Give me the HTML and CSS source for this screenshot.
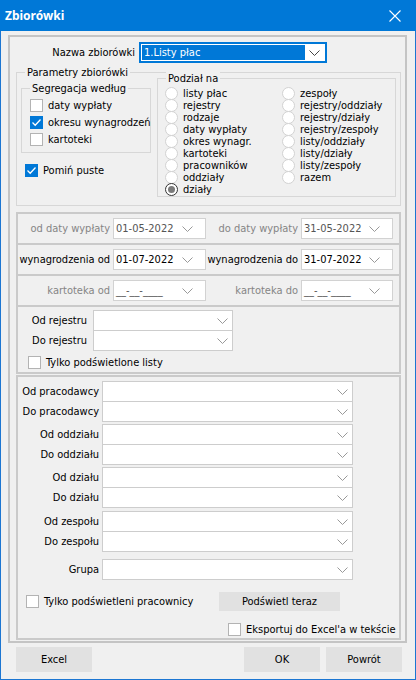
FILE: index.html
```html
<!DOCTYPE html>
<html lang="pl">
<head>
    <meta charset="UTF-8">
    <title>Zbiorówki</title>
    <link rel="stylesheet" href="styles.css">
</head>
<body>
    <div class="window">
        <div class="titlebar">
            <span class="title">Zbiorówki</span>
            <svg class="close" width="12" height="12" viewBox="0 0 12 12"><path d="M0.5 0.5 L11.5 11.5 M11.5 0.5 L0.5 11.5" stroke="#fff" stroke-width="1.1" fill="none"/></svg>
        </div>

        <div class="frame">
            <div class="name-row">
                <span class="name-label">Nazwa zbiorówki</span>
                <div class="combo focused">
                    <span class="sel">1.Listy płac</span>
                    <svg width="11" height="6" viewBox="0 0 11 6"><path d="M0.5 0.5 L5.5 5.5 L10.5 0.5" stroke="#444" fill="none"/></svg>
                </div>
            </div>

            <div class="group params">
                <div class="caption">Parametry zbiorówki</div>
                <div class="params-body">
                    <div class="params-left">
                        <div class="group segreg">
                            <div class="caption">Segregacja według</div>
                            <div class="check"><span class="box"></span>daty wypłaty</div>
                            <div class="check"><span class="box on"><svg width="11" height="11" viewBox="0 0 11 11"><path d="M1.5 5.5 L4.2 8.2 L9.5 2.5" stroke="#fff" stroke-width="1.3" fill="none"/></svg></span>okresu wynagrodzeń</div>
                            <div class="check"><span class="box"></span>kartoteki</div>
                        </div>
                        <div class="check skip"><span class="box on"><svg width="11" height="11" viewBox="0 0 11 11"><path d="M1.5 5.5 L4.2 8.2 L9.5 2.5" stroke="#fff" stroke-width="1.3" fill="none"/></svg></span>Pomiń puste</div>
                    </div>

                    <div class="group split">
                        <div class="caption">Podział na</div>
                        <div class="radio-cols">
                            <div class="radio-col first">
                                <div class="radio"><span class="dot"></span>listy płac</div>
                                <div class="radio"><span class="dot"></span>rejestry</div>
                                <div class="radio"><span class="dot"></span>rodzaje</div>
                                <div class="radio"><span class="dot"></span>daty wypłaty</div>
                                <div class="radio"><span class="dot"></span>okres wynagr.</div>
                                <div class="radio"><span class="dot"></span>kartoteki</div>
                                <div class="radio"><span class="dot"></span>pracowników</div>
                                <div class="radio"><span class="dot"></span>oddziały</div>
                                <div class="radio"><span class="dot on"></span>działy</div>
                            </div>
                            <div class="radio-col">
                                <div class="radio"><span class="dot"></span>zespoły</div>
                                <div class="radio"><span class="dot"></span>rejestry/oddziały</div>
                                <div class="radio"><span class="dot"></span>rejestry/działy</div>
                                <div class="radio"><span class="dot"></span>rejestry/zespoły</div>
                                <div class="radio"><span class="dot"></span>listy/oddziały</div>
                                <div class="radio"><span class="dot"></span>listy/działy</div>
                                <div class="radio"><span class="dot"></span>listy/zespoły</div>
                                <div class="radio"><span class="dot"></span>razem</div>
                            </div>
                        </div>
                    </div>
                </div>
            </div>

            <div class="panel dates">
                <div class="drow">
                    <span class="dlabel dim">od daty wypłaty</span>
                    <div class="date dim"><span>01-05-2022</span><svg width="11" height="6" viewBox="0 0 11 6"><path d="M0.5 0.5 L5.5 5.5 L10.5 0.5" stroke="#999" fill="none"/></svg></div>
                    <span class="dlabel dim">do daty wypłaty</span>
                    <div class="date dim"><span>31-05-2022</span><svg width="11" height="6" viewBox="0 0 11 6"><path d="M0.5 0.5 L5.5 5.5 L10.5 0.5" stroke="#999" fill="none"/></svg></div>
                </div>
                <div class="drow">
                    <span class="dlabel">wynagrodzenia od</span>
                    <div class="date"><span>01-07-2022</span><svg width="11" height="6" viewBox="0 0 11 6"><path d="M0.5 0.5 L5.5 5.5 L10.5 0.5" stroke="#999" fill="none"/></svg></div>
                    <span class="dlabel">wynagrodzenia do</span>
                    <div class="date"><span>31-07-2022</span><svg width="11" height="6" viewBox="0 0 11 6"><path d="M0.5 0.5 L5.5 5.5 L10.5 0.5" stroke="#999" fill="none"/></svg></div>
                </div>
                <div class="drow">
                    <span class="dlabel dim">kartoteka od</span>
                    <div class="date dim"><span>__-__-____</span><svg width="11" height="6" viewBox="0 0 11 6"><path d="M0.5 0.5 L5.5 5.5 L10.5 0.5" stroke="#999" fill="none"/></svg></div>
                    <span class="dlabel dim">kartoteka do</span>
                    <div class="date dim"><span>__-__-____</span><svg width="11" height="6" viewBox="0 0 11 6"><path d="M0.5 0.5 L5.5 5.5 L10.5 0.5" stroke="#999" fill="none"/></svg></div>
                </div>
            </div>

            <div class="panel registers">
                <div class="reg-row">
                    <span class="reg-label">Od rejestru</span>
                    <div class="combo reg"><svg width="11" height="6" viewBox="0 0 11 6"><path d="M0.5 0.5 L5.5 5.5 L10.5 0.5" stroke="#999" fill="none"/></svg></div>
                </div>
                <div class="reg-row second">
                    <span class="reg-label">Do rejestru</span>
                    <div class="combo reg"><svg width="11" height="6" viewBox="0 0 11 6"><path d="M0.5 0.5 L5.5 5.5 L10.5 0.5" stroke="#999" fill="none"/></svg></div>
                </div>
                <div class="check reg-check"><span class="box"></span>Tylko podświetlone listy</div>
            </div>

            <div class="panel ranges">
                <div class="lrow">
                    <span class="lab">Od pracodawcy</span>
                    <div class="combo wide"><svg width="11" height="6" viewBox="0 0 11 6"><path d="M0.5 0.5 L5.5 5.5 L10.5 0.5" stroke="#999" fill="none"/></svg></div>
                </div>
                <div class="lrow second">
                    <span class="lab">Do pracodawcy</span>
                    <div class="combo wide"><svg width="11" height="6" viewBox="0 0 11 6"><path d="M0.5 0.5 L5.5 5.5 L10.5 0.5" stroke="#999" fill="none"/></svg></div>
                </div>
                <div class="lrow gap-s">
                    <span class="lab">Od oddziału</span>
                    <div class="combo wide"><svg width="11" height="6" viewBox="0 0 11 6"><path d="M0.5 0.5 L5.5 5.5 L10.5 0.5" stroke="#999" fill="none"/></svg></div>
                </div>
                <div class="lrow second">
                    <span class="lab">Do oddziału</span>
                    <div class="combo wide"><svg width="11" height="6" viewBox="0 0 11 6"><path d="M0.5 0.5 L5.5 5.5 L10.5 0.5" stroke="#999" fill="none"/></svg></div>
                </div>
                <div class="lrow gap-s">
                    <span class="lab">Od działu</span>
                    <div class="combo wide"><svg width="11" height="6" viewBox="0 0 11 6"><path d="M0.5 0.5 L5.5 5.5 L10.5 0.5" stroke="#999" fill="none"/></svg></div>
                </div>
                <div class="lrow second">
                    <span class="lab">Do działu</span>
                    <div class="combo wide"><svg width="11" height="6" viewBox="0 0 11 6"><path d="M0.5 0.5 L5.5 5.5 L10.5 0.5" stroke="#999" fill="none"/></svg></div>
                </div>
                <div class="lrow gap-m">
                    <span class="lab">Od zespołu</span>
                    <div class="combo wide"><svg width="11" height="6" viewBox="0 0 11 6"><path d="M0.5 0.5 L5.5 5.5 L10.5 0.5" stroke="#999" fill="none"/></svg></div>
                </div>
                <div class="lrow second">
                    <span class="lab">Do zespołu</span>
                    <div class="combo wide"><svg width="11" height="6" viewBox="0 0 11 6"><path d="M0.5 0.5 L5.5 5.5 L10.5 0.5" stroke="#999" fill="none"/></svg></div>
                </div>
                <div class="lrow gap-l">
                    <span class="lab">Grupa</span>
                    <div class="combo wide"><svg width="11" height="6" viewBox="0 0 11 6"><path d="M0.5 0.5 L5.5 5.5 L10.5 0.5" stroke="#999" fill="none"/></svg></div>
                </div>

                <div class="highlight-row">
                    <div class="check"><span class="box"></span>Tylko podświetleni pracownicy</div>
                    <div class="btn small">Podświetl teraz</div>
                </div>
                <div class="check export"><span class="box"></span>Eksportuj do Excel'a w tekście</div>
            </div>
        </div>

        <div class="buttons">
            <div class="btn">Excel</div>
            <div class="spacer"></div>
            <div class="btn">OK</div>
            <div class="btn">Powrót</div>
        </div>
    </div>
</body>
</html>
```

FILE: styles.css
```css
body {
    margin: 0;
    font-family: "DejaVu Sans Condensed", "DejaVu Sans", sans-serif;
    font-size: 11px;
    color: #000;
    background: #f0f0f0;
}

.window {
    width: 416px;
    height: 680px;
    box-sizing: border-box;
    border: 1px solid #1c76d2;
    border-top: none;
    background: #f0f0f0;
}

.titlebar {
    height: 31px;
    background: #0078d7;
    color: #fff;
    display: flex;
    align-items: center;
    justify-content: space-between;
    padding: 0 15px 0 5px;
    margin: 0 -1px;
}

.title {
    font-family: "Noto Sans", "Open Sans", sans-serif;
    font-weight: bold;
    font-size: 12px;
}

.frame {
    margin: 4px 0 0 7px;
    width: 399px;
    box-sizing: border-box;
    border: 2px solid #c4c4c4;
    padding: 5px 4px 1px 6px;
}

/* nazwa */
.name-row {
    display: flex;
    align-items: center;
    height: 21px;
}

.name-label {
    width: 119px;
    margin-right: 4px;
    text-align: right;
}

.combo {
    height: 21px;
    box-sizing: border-box;
    background: #fff;
    border: 1px solid #cdcdcd;
    display: flex;
    align-items: center;
    justify-content: flex-end;
    padding-right: 4px;
}

.combo.focused {
    width: 188px;
    border: 2px solid #0078d7;
    padding: 1px 5px 1px 1px;
    justify-content: space-between;
}

.sel {
    background: #0078d7;
    color: #fff;
    width: 163px;
    height: 100%;
    line-height: 15px;
    padding-left: 2px;
    box-sizing: border-box;
}

/* grupy z podpisem na ramce */
.group {
    border: 1px solid #d7d7d7;
    box-sizing: border-box;
}

.caption {
    width: fit-content;
    margin: -7px 0 0 8px;
    padding: 0 2px;
    line-height: 13px;
    background: #f0f0f0;
    white-space: nowrap;
}

.params {
    margin-top: 9px;
    width: 385px;
}

.params-body {
    display: flex;
    align-items: flex-start;
    padding-bottom: 8px;
}

.params-left {
    width: 140px;
}

.segreg {
    margin: 9px 0 0 4px;
    width: 130px;
    padding-bottom: 4px;
}

.segreg .caption {
    margin-bottom: 2px;
}

.segreg .check {
    margin-left: 8px;
}

.check {
    display: flex;
    align-items: center;
    gap: 5px;
    height: 17px;
    white-space: nowrap;
}

.box {
    width: 13px;
    height: 13px;
    flex: none;
    box-sizing: border-box;
    border: 1px solid #b3b3b3;
    background: #fff;
    display: flex;
    align-items: center;
    justify-content: center;
}

.box.on {
    background: #0078d7;
    border-color: #0078d7;
}

.skip {
    margin: 10px 0 0 8px;
    height: 14px;
}

.split {
    margin-top: -1px;
    width: 239px;
    padding-bottom: 1px;
}

.split .caption {
    margin-bottom: 2px;
}

.radio-cols {
    display: flex;
    padding-left: 7px;
}

.radio-col.first {
    width: 117px;
}

.radio {
    display: flex;
    align-items: center;
    gap: 5px;
    height: 12px;
    white-space: nowrap;
}

.dot {
    width: 13px;
    height: 13px;
    flex: none;
    box-sizing: border-box;
    border: 1px solid #d2d2d2;
    border-radius: 50%;
    background: #fff;
    display: flex;
    align-items: center;
    justify-content: center;
}

.dot.on {
    border-color: #333;
}

.dot.on::after {
    content: "";
    width: 7px;
    height: 7px;
    border-radius: 50%;
    background: #7a7a7a;
}

/* panele */
.panel {
    width: 385px;
    box-sizing: border-box;
    border: 2px solid #cacaca;
}

.dates {
    margin-top: 6px;
}

.drow {
    display: grid;
    grid-template-columns: 95px 93px 95px 92px;
    align-items: center;
    height: 29px;
}

.drow + .drow {
    border-top: 2px solid #cacaca;
}

.dlabel {
    text-align: right;
    padding-right: 3px;
    white-space: nowrap;
}

.dlabel.dim {
    color: #858585;
}

.date {
    height: 21px;
    box-sizing: border-box;
    background: #fff;
    border: 1px solid #d2d2d2;
    display: flex;
    align-items: center;
    justify-content: space-between;
    padding: 0 12px 0 2px;
}

.date.dim {
    color: #555;
}

.registers {
    border-top: none;
    padding: 3px 0 3px 0;
}

.reg-row {
    display: flex;
    align-items: center;
}

.reg-label {
    width: 69px;
    margin-right: 6px;
    text-align: right;
}

.combo.reg {
    width: 140px;
}

.second {
    margin-top: -1px;
}

.reg-check {
    margin: 4px 0 0 10px;
    height: 14px;
}

.ranges {
    margin-top: 1px;
    padding: 4px 0 1px 0;
}

.lrow {
    display: flex;
    align-items: center;
}

.lab {
    width: 81px;
    margin-right: 3px;
    text-align: right;
    white-space: nowrap;
}

.combo.wide {
    width: 251px;
}

.gap-s {
    margin-top: 2px;
}

.gap-m {
    margin-top: 3px;
}

.gap-l {
    margin-top: 7px;
}

.highlight-row {
    display: flex;
    align-items: center;
    height: 19px;
    margin-top: 12px;
    padding-left: 8px;
}

.highlight-row .check {
    width: 193px;
}

.btn {
    background: #e1e1e1;
    height: 25px;
    width: 76px;
    display: flex;
    align-items: center;
    justify-content: center;
}

.btn.small {
    width: 121px;
    height: 19px;
}

.export {
    margin: 10px 0 0 210px;
    height: 16px;
}

.buttons {
    display: flex;
    gap: 6px;
    margin-top: 4px;
    padding: 0 13px 0 15px;
}

.spacer {
    flex: 1;
}
```
